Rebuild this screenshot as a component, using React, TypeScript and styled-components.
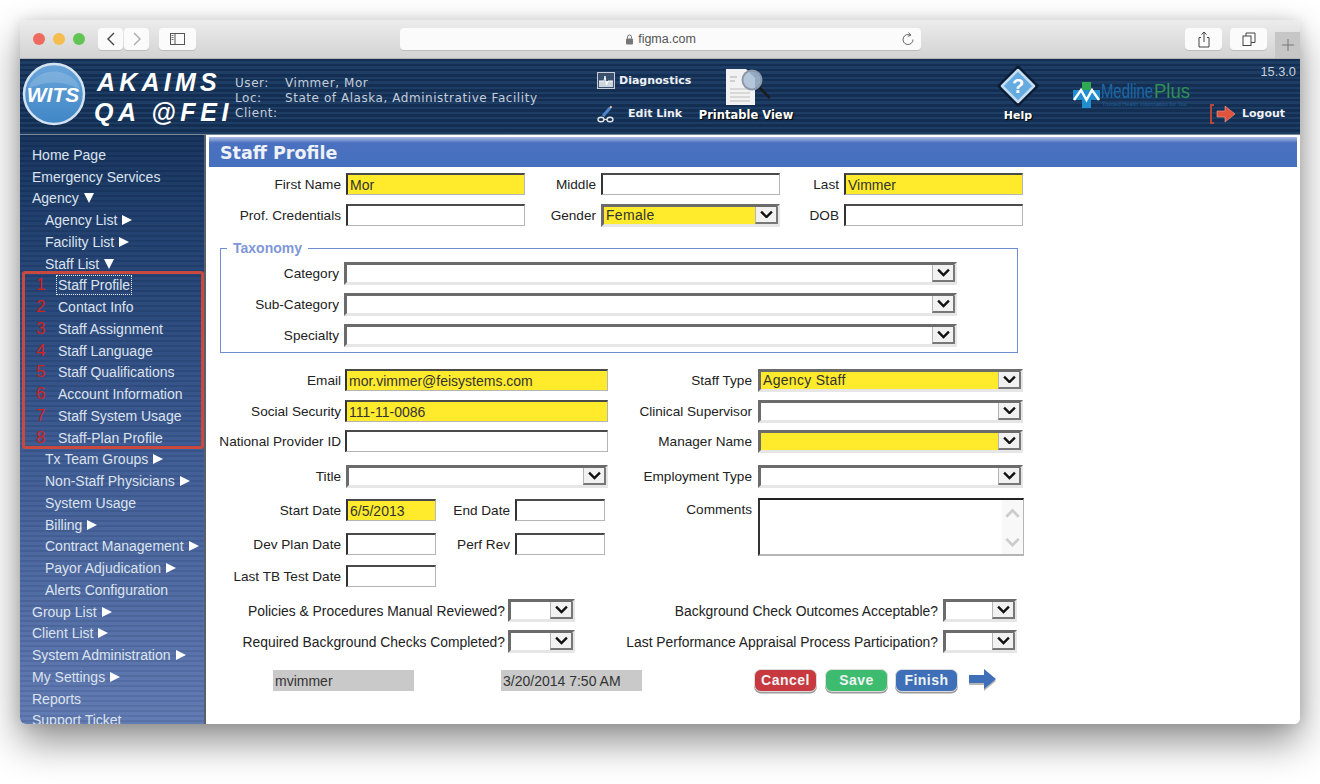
import React from "react";
import styled, { createGlobalStyle, css } from "styled-components";

const Global = createGlobalStyle`
    html, body {
        margin: 0;
        height: 100%;
        overflow: hidden;
        background: #fff;
    }
    body {
        font-family: "Liberation Sans", Arial, sans-serif;
    }
`;

const Page = styled.div`
    width: 1320px;
    height: 784px;
    padding: 20px;
    box-sizing: border-box;
`;

const Win = styled.div`
    width: 1280px;
    height: 704px;
    display: flex;
    flex-direction: column;
    border-radius: 6px;
    overflow: hidden;
    box-shadow: 0 18px 38px rgba(0, 0, 0, 0.44), 0 0 14px rgba(0, 0, 0, 0.12);
`;

/* browser chrome */
const Chrome = styled.div`
    height: 39px;
    flex: none;
    box-sizing: border-box;
    display: flex;
    align-items: flex-start;
    padding-top: 8px;
    background: linear-gradient(#ececec, #d3d3d3);
    border-bottom: 1px solid #b4b4b4;
`;

const Dot = styled.span<{ $c: string; $ml: number }>`
    width: 12px;
    height: 12px;
    margin: 5px 0 0 ${(p) => p.$ml}px;
    border-radius: 50%;
    background: ${(p) => p.$c};
    flex: none;
`;

const ChromeBtn = styled.div<{ $w: number; $ml: number }>`
    width: ${(p) => p.$w}px;
    height: 22px;
    margin-left: ${(p) => p.$ml}px;
    flex: none;
    display: flex;
    align-items: center;
    justify-content: center;
    background: #fbfbfb;
    border-radius: 4px;
    box-shadow: 0 1px 0 #bdbdbd;
    color: #444;
`;

const UrlBar = styled.div`
    width: 521px;
    height: 22px;
    margin-left: 204px;
    flex: none;
    display: flex;
    align-items: center;
    justify-content: center;
    position: relative;
    gap: 4px;
    font-size: 12.5px;
    color: #555;
    background: #fbfbfb;
    border-radius: 4px;
    box-shadow: 0 1px 0 #bdbdbd;
`;

const Reload = styled.svg`
    position: absolute;
    right: 6px;
    top: 4px;
`;

const NewTab = styled.div`
    width: 25px;
    height: 26px;
    margin: 4px 0 0 8px;
    flex: none;
    display: flex;
    align-items: center;
    justify-content: center;
    background: #c6c6c6;
    color: #777;
`;

/* app header */
const stripes = css`
    repeating-linear-gradient(180deg, rgba(0, 0, 0, 0.14) 0 2.5px, rgba(255, 255, 255, 0.035) 2.5px 5px)
`;

const sideStripes = css`
    repeating-linear-gradient(180deg, rgba(0, 0, 0, 0.07) 0 2.5px, rgba(255, 255, 255, 0.02) 2.5px 5px)
`;

const Header = styled.div`
    height: 76px;
    flex: none;
    box-sizing: border-box;
    display: flex;
    background: ${stripes}, #16365f;
    border-bottom: 1px solid #7d8796;
    color: #fff;
`;

const Logo = styled.svg`
    margin: 3px 0 0 2px;
    flex: none;
`;

const TitleBlock = styled.div`
    width: 141px;
    margin-left: 8px;
    flex: none;
    padding-top: 8px;
    font-size: 25px;
    line-height: 30px;
    font-weight: 700;
    font-style: italic;
    letter-spacing: 4.2px;
    white-space: nowrap;
`;

const TitleTop = styled.div`
    margin-left: 3px;
`;

const TitleBottom = styled.div`
    letter-spacing: 4.6px;
`;

const Info = styled.div`
    width: 362px;
    flex: none;
    padding-top: 17px;
    display: grid;
    grid-template-columns: 50px 1fr;
    grid-auto-rows: 15px;
    font-family: "DejaVu Sans", Verdana, sans-serif;
    font-size: 12px;
    letter-spacing: 0.55px;
    line-height: 15px;
    color: #c4cddb;
    white-space: nowrap;
`;

const ToolStack = styled.div`
    width: 102px;
    flex: none;
    padding-top: 12px;
    display: flex;
    flex-direction: column;
    gap: 14px;
`;

const ToolLink = styled.div<{ $gap: number }>`
    height: 19px;
    display: flex;
    align-items: center;
    gap: ${(p) => p.$gap}px;
    font-family: "DejaVu Sans", Verdana, sans-serif;
    font-size: 11px;
    font-weight: 700;
    color: #eef1f5;
    white-space: nowrap;
`;

const ToolCol = styled.div<{ $w: number; $ml: number }>`
    width: ${(p) => p.$w}px;
    margin-left: ${(p) => p.$ml}px;
    flex: none;
    display: flex;
    flex-direction: column;
    align-items: center;
    padding-top: 6px;
`;

const ToolCaption = styled.div<{ $size: number }>`
    font-family: "DejaVu Sans", Verdana, sans-serif;
    font-size: ${(p) => p.$size}px;
    font-weight: 700;
    line-height: 13px;
    color: #fff;
    white-space: nowrap;
    text-shadow: 1px 1px 1px #000;
`;

const Medline = styled.svg`
    margin: 22px 0 0 25px;
    flex: none;
`;

const RightCol = styled.div`
    width: 89px;
    margin-left: 14px;
    flex: none;
    display: flex;
    flex-direction: column;
    padding-top: 6px;
`;

const Version = styled.div`
    text-align: right;
    font-size: 12.8px;
    line-height: 14px;
    color: #c9d0da;
    margin-bottom: 25px;
`;

/* main */
const Body = styled.div`
    flex: 1;
    min-height: 0;
    display: flex;
`;

const Side = styled.nav`
    width: 184px;
    flex: none;
    box-sizing: border-box;
    padding-top: 9px;
    overflow: hidden;
    background: ${sideStripes}, linear-gradient(180deg, #14325c 0%, #2c4b80 35%, #3d5b93 55%, #5f79b2 100%);
`;

const SideRow = styled.div<{ $level: number }>`
    height: 21.75px;
    display: flex;
    align-items: center;
    padding-left: ${(p) => 12 + p.$level * 13}px;
    font-size: 14px;
    color: #dde3ee;
    white-space: nowrap;
`;

const StaffGroup = styled.div`
    position: relative;

    &::after {
        content: "";
        position: absolute;
        top: -3.5px;
        bottom: 0;
        left: 2px;
        right: 0;
        border: 3px solid #c9493e;
        border-radius: 3px;
    }
`;

const StaffRow = styled.div`
    height: 21.75px;
    display: flex;
    align-items: center;
    padding-left: 16px;
    font-size: 14px;
    color: #dde3ee;
    white-space: nowrap;
`;

const StaffNum = styled.span`
    width: 22px;
    flex: none;
    font-size: 17px;
    color: #d3201b;
`;

const StaffText = styled.span<{ $focus?: boolean }>`
    outline: ${(p) => (p.$focus ? "1px dotted #e8ecf3" : "none")};
    outline-offset: 1px;
`;

const RightTri = styled.span`
    width: 0;
    height: 0;
    margin-left: 5px;
    border-left: 10px solid #fff;
    border-top: 5px solid transparent;
    border-bottom: 5px solid transparent;
`;

const DownTri = styled.span`
    width: 0;
    height: 0;
    margin-left: 5px;
    border-top: 10px solid #fff;
    border-left: 5px solid transparent;
    border-right: 5px solid transparent;
`;

const Divider = styled.div`
    width: 2px;
    flex: none;
    background: #5a5f68;
`;

const Panel = styled.main`
    flex: 1;
    min-width: 0;
    background: #fff;
    padding-top: 2px;
    color: #222;
    font-size: 14px;
`;

const TitleBar = styled.h1`
    height: 30px;
    box-sizing: border-box;
    margin: 0 3px 0 3px;
    padding: 2px 0 0 11px;
    display: flex;
    align-items: center;
    font-family: "DejaVu Sans", Verdana, sans-serif;
    font-size: 17.5px;
    font-weight: 700;
    color: #eef1f8;
    background: linear-gradient(180deg, #aebde2 0, #4a71c0 6px, #4670bf 100%);
`;

const Row = styled.div<{ $top: number; $h?: number }>`
    display: flex;
    align-items: center;
    height: ${(p) => p.$h ?? 22}px;
    margin-top: ${(p) => p.$top}px;
`;

const Label = styled.label<{ $w: number; $gap?: number; $long?: boolean }>`
    width: ${(p) => p.$w}px;
    margin-right: ${(p) => p.$gap ?? 5}px;
    flex: none;
    text-align: right;
    white-space: nowrap;
    font-size: ${(p) => (p.$long ? 13.85 : 13.6)}px;
`;

const Input = styled.input<{ $w: number; $yellow?: boolean }>`
    width: ${(p) => p.$w}px;
    height: 22px;
    flex: none;
    box-sizing: border-box;
    padding: 0 2px;
    font: 14px "Liberation Sans", Arial, sans-serif;
    color: #333;
    background: ${(p) => (p.$yellow ? "#ffeb2b" : "#fff")};
    border-style: solid;
    border-width: 2px 1px 1px 2px;
    border-color: #4a4a4a #b5b5b5 #b5b5b5 #333;
    outline: none;
`;

const SelectBox = styled.div<{ $w: number; $yellow?: boolean }>`
    width: ${(p) => p.$w}px;
    height: 23px;
    flex: none;
    box-sizing: border-box;
    display: flex;
    border-style: solid;
    border-width: 3px;
    border-color: #6b6b6b #e6e6e6 #e6e6e6 #6b6b6b;
    background: ${(p) => (p.$yellow ? "#ffeb2b" : "#fff")};
`;

const SelectValue = styled.span`
    flex: 1;
    min-width: 0;
    padding-left: 2px;
    line-height: 17px;
    letter-spacing: 0.3px;
    color: #333;
    white-space: nowrap;
`;

const SelectBtn = styled.span`
    width: 23px;
    height: 17px;
    flex: none;
    box-sizing: border-box;
    display: flex;
    align-items: center;
    justify-content: center;
    margin-right: -1px;
    background: #f1f1f1;
    border-left: 1px solid #b5b5b5;
    border-right: 2px solid #777;
    border-bottom: 2px solid #777;
`;

const Tax = styled.fieldset`
    width: 798px;
    height: 113px;
    box-sizing: border-box;
    margin: 14px 0 0 14px;
    padding: 0;
    border: 1px solid #6d8ed4;
`;

const TaxLegend = styled.legend`
    margin-left: 6px;
    padding: 0 6px;
    font-size: 14px;
    line-height: 16px;
    font-weight: 700;
    color: #7f97d8;
`;

const Columns = styled.div`
    display: flex;
    margin-top: 16px;
`;

const LeftCol = styled.div`
    width: 402px;
    flex: none;
`;

const RightForm = styled.div`
    flex: 1;
    min-width: 0;
`;

const CommentRow = styled.div`
    display: flex;
    margin-top: 10px;
`;

const CommentLabel = styled(Label)`
    padding-top: 4px;
`;

const Comment = styled.div`
    width: 266px;
    height: 58px;
    box-sizing: border-box;
    display: flex;
    border-style: solid;
    border-width: 2px 1px 2px 2px;
    border-color: #222 #b5b5b5 #b5b5b5 #333;
`;

const CommentText = styled.textarea`
    flex: 1;
    min-width: 0;
    border: 0;
    outline: none;
    resize: none;
    padding: 2px;
`;

const CommentScroll = styled.div`
    width: 21px;
    flex: none;
    display: flex;
    flex-direction: column;
    align-items: center;
    justify-content: space-between;
    padding: 8px 0 7px;
    background: #f8f8f8;
`;

const Foot = styled.div`
    display: flex;
    align-items: center;
    height: 24px;
    margin-top: 15px;
    padding-left: 67px;
`;

const Stamp = styled.div<{ $mr: number }>`
    width: 141px;
    height: 21px;
    margin-right: ${(p) => p.$mr}px;
    flex: none;
    box-sizing: border-box;
    padding-left: 2px;
    line-height: 22px;
    background: #c9c9c9;
    color: #333;
`;

const Btn = styled.button<{ $c: string; $mr: number }>`
    width: 63px;
    height: 23px;
    margin-right: ${(p) => p.$mr}px;
    flex: none;
    padding: 0;
    font: 700 14px "Liberation Sans", Arial, sans-serif;
    letter-spacing: 0.5px;
    color: #eef3f3;
    background: ${(p) => p.$c};
    border: 1px solid #dcdcdc;
    border-radius: 7px;
    box-shadow: 0 1.5px 0 #9a9a9a;
`;

const Chevron = ({ c = "#111", up = false, w = 13 }: { c?: string; up?: boolean; w?: number }) => (
    <svg width={w} height={(w * 8) / 12} viewBox="0 0 12 8">
        <polyline
            points={up ? "1,7 6,2 11,7" : "1,1.5 6,6.5 11,1.5"}
            fill="none"
            stroke={c}
            strokeWidth={2.2}
        />
    </svg>
);

const Select = ({ w, value, yellow }: { w: number; value?: string; yellow?: boolean }) => (
    <SelectBox $w={w} $yellow={yellow}>
        <SelectValue>{value}</SelectValue>
        <SelectBtn>
            <Chevron />
        </SelectBtn>
    </SelectBox>
);

const nav = [
    { t: "Home Page", l: 0 },
    { t: "Emergency Services", l: 0 },
    { t: "Agency", l: 0, d: true },
    { t: "Agency List", l: 1, r: true },
    { t: "Facility List", l: 1, r: true },
    { t: "Staff List", l: 1, d: true },
];

const staff = [
    "Staff Profile",
    "Contact Info",
    "Staff Assignment",
    "Staff Language",
    "Staff Qualifications",
    "Account Information",
    "Staff System Usage",
    "Staff-Plan Profile",
];

const nav2 = [
    { t: "Tx Team Groups", l: 1, r: true },
    { t: "Non-Staff Physicians", l: 1, r: true },
    { t: "System Usage", l: 1 },
    { t: "Billing", l: 1, r: true },
    { t: "Contract Management", l: 1, r: true },
    { t: "Payor Adjudication", l: 1, r: true },
    { t: "Alerts Configuration", l: 1 },
    { t: "Group List", l: 0, r: true },
    { t: "Client List", l: 0, r: true },
    { t: "System Administration", l: 0, r: true },
    { t: "My Settings", l: 0, r: true },
    { t: "Reports", l: 0 },
    { t: "Support Ticket", l: 0 },
];

type NavItem = { t: string; l: number; r?: boolean; d?: boolean };

const NavRows = ({ items }: { items: NavItem[] }) => (
    <>
        {items.map((n) => (
            <SideRow key={n.t} $level={n.l}>
                {n.t}
                {n.r && <RightTri />}
                {n.d && <DownTri />}
            </SideRow>
        ))}
    </>
);

export default function App() {
    return (
        <Page>
            <Global />
            <Win>
                <Chrome>
                    <Dot $c="#ee6a5f" $ml={13} />
                    <Dot $c="#f5bd4f" $ml={8} />
                    <Dot $c="#61c554" $ml={8} />
                    <ChromeBtn $w={25} $ml={13}>
                        <svg width="10" height="14" viewBox="0 0 10 14">
                            <polyline points="8,1 2,7 8,13" fill="none" stroke="#444" strokeWidth="1.4" />
                        </svg>
                    </ChromeBtn>
                    <ChromeBtn $w={25} $ml={1}>
                        <svg width="10" height="14" viewBox="0 0 10 14">
                            <polyline points="2,1 8,7 2,13" fill="none" stroke="#aaa" strokeWidth="1.4" />
                        </svg>
                    </ChromeBtn>
                    <ChromeBtn $w={37} $ml={10}>
                        <svg width="15" height="12" viewBox="0 0 15 12">
                            <rect x="0.5" y="0.5" width="14" height="11" fill="none" stroke="#555" />
                            <line x1="5" y1="0.5" x2="5" y2="11.5" stroke="#555" />
                            <path d="M1.5 2.5h2M1.5 4.5h2M1.5 6.5h2" stroke="#777" />
                        </svg>
                    </ChromeBtn>
                    <UrlBar>
                        <svg width="9" height="11" viewBox="0 0 9 11">
                            <rect x="1" y="4.5" width="7" height="6" rx="1" fill="#777" />
                            <path d="M2.5 4.5V3a2 2 0 0 1 4 0v1.5" fill="none" stroke="#777" />
                        </svg>
                        figma.com
                        <Reload width="14" height="14" viewBox="0 0 14 14">
                            <path d="M9.5 3.2A5 5 0 1 0 12 7.5" fill="none" stroke="#666" strokeWidth="1" />
                            <path d="M7.5 0.5l2.4 2.6-3 1.2" fill="none" stroke="#666" strokeWidth="1" />
                        </Reload>
                    </UrlBar>
                    <ChromeBtn $w={37} $ml={264}>
                        <svg width="12" height="17" viewBox="0 0 12 17">
                            <path d="M3 6.5H1v9.5h10V6.5H9" fill="none" stroke="#444" />
                            <path d="M6 11V1M3.5 3.5L6 1l2.5 2.5" fill="none" stroke="#444" />
                        </svg>
                    </ChromeBtn>
                    <ChromeBtn $w={37} $ml={8}>
                        <svg width="14" height="14" viewBox="0 0 14 14">
                            <rect x="1" y="4" width="8" height="9.5" fill="none" stroke="#444" />
                            <path d="M4 4V1h9v9.5H9" fill="none" stroke="#444" />
                        </svg>
                    </ChromeBtn>
                    <NewTab>
                        <svg width="12" height="12" viewBox="0 0 12 12">
                            <path d="M6 0v12M0 6h12" stroke="#777" />
                        </svg>
                    </NewTab>
                </Chrome>

                <Header>
                    <Logo width="64" height="64" viewBox="0 0 64 64">
                        <defs>
                            <linearGradient id="wits" x1="0" y1="0" x2="0" y2="1">
                                <stop offset="0" stopColor="#6aa5da" />
                                <stop offset="1" stopColor="#3f86c6" />
                            </linearGradient>
                        </defs>
                        <circle cx="32" cy="32" r="30" fill="url(#wits)" stroke="#d5e3f0" strokeWidth="2.5" />
                        <path d="M6 27A27 24 0 0 1 58 27Q32 14 6 27Z" fill="#fff" opacity="0.16" />
                        <text
                            x="31"
                            y="40"
                            textAnchor="middle"
                            fontFamily="Liberation Sans"
                            fontStyle="italic"
                            fontWeight="700"
                            fontSize="21"
                            fill="#fff"
                        >
                            WITS
                        </text>
                    </Logo>
                    <TitleBlock>
                        <TitleTop>AKAIMS</TitleTop>
                        <TitleBottom>QA @FEI</TitleBottom>
                    </TitleBlock>
                    <Info>
                        <span>User:</span>
                        <span>Vimmer, Mor</span>
                        <span>Loc:</span>
                        <span>State of Alaska, Administrative Facility</span>
                        <span>Client:</span>
                        <span />
                    </Info>
                    <ToolStack>
                        <ToolLink $gap={4}>
                            <svg width="18" height="17" viewBox="0 0 18 17">
                                <rect x="0.5" y="0.5" width="17" height="16" fill="#39506f" stroke="#c9ced6" />
                                <rect x="2" y="9" width="14" height="6" fill="#cfd5dd" />
                                <path d="M2 9h5l1-5 1.5 9L11 9h5" fill="none" stroke="#fff" />
                            </svg>
                            Diagnostics
                        </ToolLink>
                        <ToolLink $gap={13}>
                            <svg width="18" height="19" viewBox="0 0 18 19">
                                <ellipse cx="4" cy="15.5" rx="3" ry="2.2" fill="none" stroke="#e6e6e6" strokeWidth="1.4" />
                                <ellipse cx="13" cy="15.5" rx="3" ry="2.2" fill="none" stroke="#e6e6e6" strokeWidth="1.4" />
                                <path d="M7 15.5h3" stroke="#e6e6e6" />
                                <path d="M6 12L13 4" stroke="#4f86d0" strokeWidth="3" />
                                <path d="M13 4l1.5-1.7" stroke="#e8c9a0" strokeWidth="2" />
                            </svg>
                            Edit Link
                        </ToolLink>
                    </ToolStack>
                    <ToolCol $w={94} $ml={0}>
                        <svg width="48" height="44" viewBox="0 0 48 44">
                            <path d="M4 4h20l9 9v27H4z" fill="#f2f2f2" />
                            <path d="M8 12h7M8 16h5" stroke="#c4c4c4" strokeWidth="1.5" />
                            <path d="M8 24h20M8 28h20M8 32h20M8 36h20" stroke="#cfcfcf" strokeWidth="1.5" />
                            <path d="M37 22L48 33" stroke="#1c1c1c" strokeWidth="2.5" />
                            <circle cx="30" cy="15" r="9.5" fill="#a9bed6" fillOpacity="0.85" stroke="#8d99a8" strokeWidth="2" />
                        </svg>
                        <ToolCaption $size={11.5}>Printable View</ToolCaption>
                    </ToolCol>
                    <ToolCol $w={60} $ml={195}>
                        <svg width="44" height="44" viewBox="0 0 44 44">
                            <path d="M22 2L41 21L22 40L3 21Z" fill="#0f2748" stroke="#0a1a30" strokeWidth="3" strokeLinejoin="round" />
                            <path d="M22 5L38 21L22 37L6 21Z" fill="#66abe0" stroke="#c3def2" strokeWidth="2.5" strokeLinejoin="round" />
                            <text
                                x="22"
                                y="28"
                                textAnchor="middle"
                                fontFamily="Liberation Sans"
                                fontWeight="700"
                                fontSize="20"
                                fill="#fff"
                            >
                                ?
                            </text>
                        </svg>
                        <ToolCaption $size={11}>Help</ToolCaption>
                    </ToolCol>
                    <Medline width="120" height="30" viewBox="0 0 120 30">
                        <path d="M9 1h9v8h9v10h-9v8H9v-8H0V9h9z" fill="#1f8fd0" />
                        <path d="M9 1h9v8H9z" fill="#2fa84f" />
                        <path d="M1 19L8 9l5.5 10L19 9l7 10" fill="none" stroke="#fff" strokeWidth="2.5" />
                        <text x="28" y="17" fontFamily="Liberation Sans" fontSize="20" textLength="52" lengthAdjust="spacingAndGlyphs" fill="#1c68a6">
                            Medline
                        </text>
                        <text x="81" y="17" fontFamily="Liberation Sans" fontSize="20" textLength="36" lengthAdjust="spacingAndGlyphs" fill="#2f8f55">
                            Plus
                        </text>
                        <text x="29" y="25" fontFamily="Liberation Sans" fontSize="5" textLength="85" lengthAdjust="spacingAndGlyphs" fill="#1f5f9a">
                            Trusted Health Information for You
                        </text>
                    </Medline>
                    <RightCol>
                        <Version>15.3.0</Version>
                        <ToolLink $gap={6}>
                            <svg width="29" height="20" viewBox="0 0 29 20">
                                <path d="M7 1H4v18h3" fill="none" stroke="#b8473a" strokeWidth="2" />
                                <path d="M10 7h8V2l10 8-10 8v-5h-8z" fill="#e0533d" stroke="#f0a090" strokeWidth="0.6" />
                            </svg>
                            Logout
                        </ToolLink>
                    </RightCol>
                </Header>

                <Body>
                    <Side>
                        <NavRows items={nav} />
                        <StaffGroup>
                            {staff.map((s, i) => (
                                <StaffRow key={s}>
                                    <StaffNum>{i + 1}</StaffNum>
                                    <StaffText $focus={i === 0}>{s}</StaffText>
                                </StaffRow>
                            ))}
                        </StaffGroup>
                        <NavRows items={nav2} />
                    </Side>
                    <Divider />
                    <Panel>
                        <TitleBar>Staff Profile</TitleBar>
                        <Row $top={6}>
                            <Label $w={135}>First Name</Label>
                            <Input $w={179} $yellow readOnly value="Mor" />
                            <Label $w={71}>Middle</Label>
                            <Input $w={179} readOnly value="" />
                            <Label $w={59}>Last</Label>
                            <Input $w={179} $yellow readOnly value="Vimmer" />
                        </Row>
                        <Row $top={9}>
                            <Label $w={135}>Prof. Credentials</Label>
                            <Input $w={179} readOnly value="" />
                            <Label $w={71}>Gender</Label>
                            <Select w={179} value="Female" yellow />
                            <Label $w={59}>DOB</Label>
                            <Input $w={179} readOnly value="" />
                        </Row>
                        <Tax>
                            <TaxLegend>Taxonomy</TaxLegend>
                            <Row $top={6} $h={23}>
                                <Label $w={118}>Category</Label>
                                <Select w={613} />
                            </Row>
                            <Row $top={8} $h={23}>
                                <Label $w={118}>Sub-Category</Label>
                                <Select w={613} />
                            </Row>
                            <Row $top={8} $h={23}>
                                <Label $w={118}>Specialty</Label>
                                <Select w={613} />
                            </Row>
                        </Tax>
                        <Columns>
                            <LeftCol>
                                <Row $top={0}>
                                    <Label $w={135} $gap={4}>Email</Label>
                                    <Input $w={263} $yellow readOnly value="mor.vimmer@feisystems.com" />
                                </Row>
                                <Row $top={9}>
                                    <Label $w={135} $gap={4}>Social Security</Label>
                                    <Input $w={263} $yellow readOnly value="111-11-0086" />
                                </Row>
                                <Row $top={8}>
                                    <Label $w={135} $gap={4}>National Provider ID</Label>
                                    <Input $w={263} readOnly value="" />
                                </Row>
                                <Row $top={13} $h={23}>
                                    <Label $w={135} $gap={5}>Title</Label>
                                    <Select w={262} />
                                </Row>
                                <Row $top={11}>
                                    <Label $w={135}>Start Date</Label>
                                    <Input $w={90} $yellow readOnly value="6/5/2013" />
                                    <Label $w={74}>End Date</Label>
                                    <Input $w={90} readOnly value="" />
                                </Row>
                                <Row $top={12}>
                                    <Label $w={135}>Dev Plan Date</Label>
                                    <Input $w={90} readOnly value="" />
                                    <Label $w={74}>Perf Rev</Label>
                                    <Input $w={90} readOnly value="" />
                                </Row>
                                <Row $top={10}>
                                    <Label $w={135}>Last TB Test Date</Label>
                                    <Input $w={90} readOnly value="" />
                                </Row>
                            </LeftCol>
                            <RightForm>
                                <Row $top={0}>
                                    <Label $w={144} $gap={6}>Staff Type</Label>
                                    <Select w={265} value="Agency Staff" yellow />
                                </Row>
                                <Row $top={9}>
                                    <Label $w={144} $gap={6}>Clinical Supervisor</Label>
                                    <Select w={265} />
                                </Row>
                                <Row $top={8}>
                                    <Label $w={144} $gap={6}>Manager Name</Label>
                                    <Select w={265} yellow />
                                </Row>
                                <Row $top={13} $h={23}>
                                    <Label $w={144} $gap={6}>Employment Type</Label>
                                    <Select w={265} />
                                </Row>
                                <CommentRow>
                                    <CommentLabel $w={144} $gap={6}>Comments</CommentLabel>
                                    <Comment>
                                        <CommentText readOnly />
                                        <CommentScroll>
                                            <Chevron c="#ccc" up w={15} />
                                            <Chevron c="#ccc" w={15} />
                                        </CommentScroll>
                                    </Comment>
                                </CommentRow>
                            </RightForm>
                        </Columns>
                        <Row $top={12} $h={23}>
                            <Label $w={299} $gap={3} $long>Policies &amp; Procedures Manual Reviewed?</Label>
                            <Select w={67} />
                            <Label $w={363} $long>Background Check Outcomes Acceptable?</Label>
                            <Select w={74} />
                        </Row>
                        <Row $top={8} $h={23}>
                            <Label $w={299} $gap={3} $long>Required Background Checks Completed?</Label>
                            <Select w={67} />
                            <Label $w={363} $long>Last Performance Appraisal Process Participation?</Label>
                            <Select w={74} />
                        </Row>
                        <Foot>
                            <Stamp $mr={87}>mvimmer</Stamp>
                            <Stamp $mr={112}>3/20/2014 7:50 AM</Stamp>
                            <Btn $c="#c8383f" $mr={8}>Cancel</Btn>
                            <Btn $c="#3dbb6e" $mr={7}>Save</Btn>
                            <Btn $c="#3f6fb8" $mr={10}>Finish</Btn>
                            <svg width="30" height="24" viewBox="0 0 30 24">
                                <path d="M1 9h15V3l12 10-12 10v-6H1z" fill="#b5b5b5" />
                                <path d="M1 7h15V1l12 10-12 10v-6H1z" fill="#3f6fb8" />
                            </svg>
                        </Foot>
                    </Panel>
                </Body>
            </Win>
        </Page>
    );
}
